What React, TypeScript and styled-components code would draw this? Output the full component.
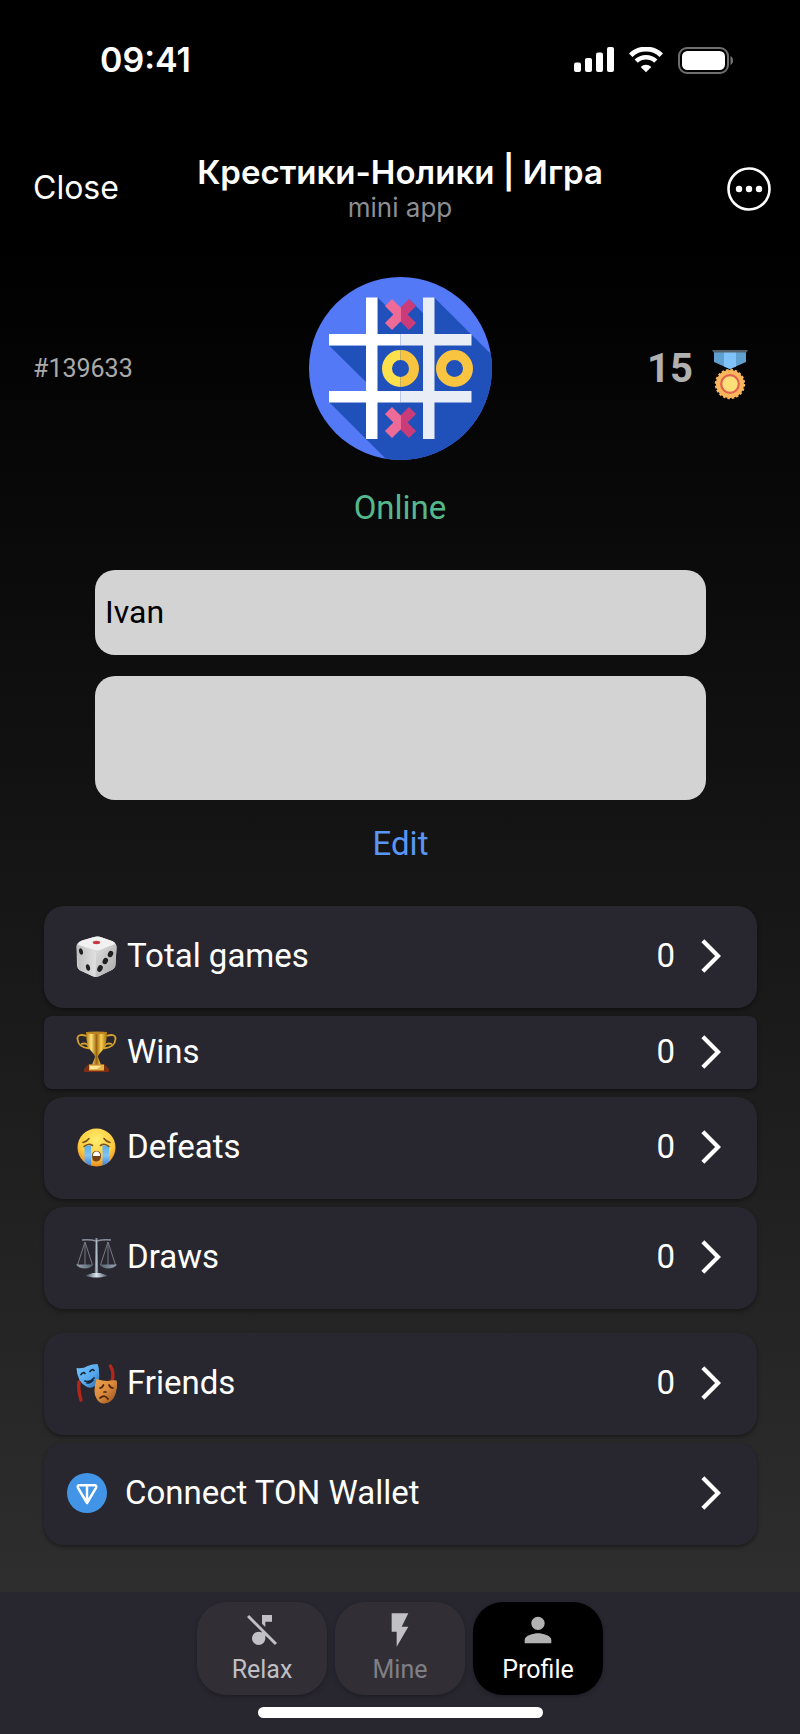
import React from "react";
import styled, { createGlobalStyle } from "styled-components";
import { MdArrowForwardIos, MdFlashOn, MdMusicOff, MdPerson } from "react-icons/md";

const GlobalStyle = createGlobalStyle`
  * { box-sizing: border-box; }
  body { margin: 0; background: #000; }
  button, input, textarea { font: inherit; color: inherit; border: 0; margin: 0; }
  button { background: none; padding: 0; cursor: pointer; }
`;

const Page = styled.div`
  min-height: 100vh;
  display: flex;
  flex-direction: column;
  color: #fff;
  font-family: Roboto, sans-serif;
  font-size: 33px;
  line-height: 40px;
  background: linear-gradient(#000 250px, #2e2e2e calc(100% - 142px));
`;

const StatusBar = styled.div`
  display: flex;
  align-items: center;
  justify-content: space-between;
  padding: 40px 66px 40px 100px;
  font-family: Inter, sans-serif;
  font-weight: 600;
  font-size: 34px;
`;

const StatusIcons = styled.div`
  display: flex;
  align-items: center;
  gap: 15px;
`;

const Header = styled.header`
  display: grid;
  grid-template-columns: 1fr auto 1fr;
  align-items: center;
  padding: 32px 29px;
  font-family: Inter, sans-serif;
`;

const CloseButton = styled.button`
  justify-self: start;
  margin-left: 4px;
  font-size: 32px;
`;

const TitleBlock = styled.div`
  text-align: center;
`;

const Title = styled.h1`
  margin: 0;
  font-size: 33px;
  line-height: 40px;
  font-weight: 600;
`;

const Subtitle = styled.div`
  font-size: 26px;
  line-height: 32px;
  color: #8e8e93;
`;

const MoreButton = styled.button`
  justify-self: end;
  display: flex;
  padding-top: 2px;
`;

const Summary = styled.section`
  display: grid;
  grid-template-columns: 1fr auto 1fr;
  align-items: center;
  padding: 21px 52px 0 33px;
`;

const UserId = styled.span`
  font-size: 25px;
  color: #aaa;
`;

const Score = styled.div`
  justify-self: end;
  display: flex;
  align-items: center;
  gap: 19px;
  font-size: 40px;
  font-weight: 700;
  color: #b0b0b0;

  svg {
    margin-top: 12px;
  }
`;

const Avatar = styled.svg`
  display: block;
  margin-left: 19px;
`;

const Online = styled.p`
  margin: 28px 0 0;
  text-align: center;
  color: #55b88c;
`;

const Form = styled.form`
  display: flex;
  flex-direction: column;
  align-items: stretch;
  gap: 21px;
  padding: 42px 94px 0 95px;
`;

const NameField = styled.input`
  width: 100%;
  height: 85px;
  padding: 0 10px 2px;
  border-radius: 20px;
  background: #d3d3d3;
  color: #000;
  font-size: 32px;
`;

const BioField = styled.textarea`
  display: block;
  width: 100%;
  height: 124px;
  padding: 20px 10px;
  border-radius: 20px;
  background: #d3d3d3;
  color: #000;
  font-size: 32px;
  resize: none;
`;

const EditButton = styled.button`
  align-self: center;
  margin-top: 3px;
  color: #5a96f5;
`;

const List = styled.div`
  display: flex;
  flex-direction: column;
  gap: 8px;
  padding: 42px 43px 0 44px;
`;

const Row = styled.button<{ $compact?: boolean; $section?: boolean; $wallet?: boolean }>`
  display: flex;
  align-items: center;
  gap: ${(p) => (p.$wallet ? 18 : 10)}px;
  min-height: ${(p) => (p.$compact ? 73 : 102)}px;
  margin-top: ${(p) => (p.$section ? 16 : 0)}px;
  padding: 0 26px 2px ${(p) => (p.$wallet ? 23 : 32)}px;
  border-radius: ${(p) => (p.$compact ? 8 : 20)}px;
  background: #28272f;
  box-shadow: 0 2px 4px rgba(0, 0, 0, 0.4);
  text-align: left;

  > svg {
    flex: none;
  }
`;

const RowLabel = styled.span`
  flex: 1;
`;

const RowValue = styled.span`
  margin-right: 6px;
`;

const BottomBar = styled.footer`
  margin-top: auto;
  display: flex;
  flex-direction: column;
  align-items: center;
  gap: 12px;
  padding: 10px 0 16px;
  background: #282730;
`;

const Tabs = styled.nav`
  display: flex;
  gap: 8px;
`;

const Tab = styled.button<{ $tone: "normal" | "dim" | "active" }>`
  width: 130px;
  height: 93px;
  display: flex;
  flex-direction: column;
  align-items: center;
  padding-top: 8px;
  border-radius: 30px;
  font-size: 25px;
  line-height: 40px;
  background: ${(p) => (p.$tone === "active" ? "#000" : "#312f35")};
  color: ${(p) => ({ normal: "#c0bfc4", dim: "#807f85", active: "#fff" })[p.$tone]};
  box-shadow: 0 2px 5px rgba(0, 0, 0, 0.25);

  svg {
    flex: none;
    color: ${(p) => (p.$tone === "active" ? "#b2b2b2" : "#c1c0c4")};
  }
`;

const HomeIndicator = styled.div`
  width: 285px;
  height: 11px;
  border-radius: 6px;
  background: #fff;
`;

const Signal = () => (
  <svg width="40" height="26" viewBox="0 0 40 26" fill="#fff">
    <rect x="0" y="15.5" width="7" height="9.5" rx="2" />
    <rect x="11" y="11" width="7" height="14" rx="2" />
    <rect x="22" y="5.5" width="7" height="19.5" rx="2" />
    <rect x="33" y="0" width="7" height="25" rx="2" />
  </svg>
);

const Wifi = () => (
  <svg width="34" height="26" viewBox="0 0 34 26" fill="none" stroke="#fff">
    <path d="M1.7 8.3a22 22 0 0 1 30.6 0" strokeWidth="5" />
    <path d="M7.2 14.2a14.2 14.2 0 0 1 19.6 0" strokeWidth="4.6" />
    <path d="M17 25.2l-5.3-5.3a7.5 7.5 0 0 1 10.6 0z" fill="#fff" stroke="none" />
  </svg>
);

const Battery = () => (
  <svg width="56" height="27" viewBox="0 0 56 27">
    <rect x="1" y="1" width="49" height="25" rx="8" fill="none" stroke="#6f6f6f" strokeWidth="2" />
    <rect x="4" y="4" width="43" height="19" rx="5.5" fill="#fff" />
    <path d="M52.5 9c3.3 1.3 3.3 7.7 0 9z" fill="#777" />
  </svg>
);

const More = () => (
  <svg width="44" height="44" viewBox="0 0 44 44" fill="#fff">
    <circle cx="22" cy="22" r="20.5" fill="none" stroke="#fff" strokeWidth="2.6" />
    <circle cx="12" cy="22" r="3.2" />
    <circle cx="22" cy="22" r="3.2" />
    <circle cx="32" cy="22" r="3.2" />
  </svg>
);

const Cross = ({ y }: { y: number }) => (
  <g strokeWidth="10" fill="none">
    <path d={`M79.5 ${y - 12}l12 12l-12 12`} stroke="#ee6a97" />
    <path d={`M103.5 ${y - 12}l-12 12l12 12`} stroke="#c93c79" />
    <path d={`M91.5 ${y - 7}v14l-7-7z`} fill="#ee6a97" stroke="none" />
    <path d={`M91.5 ${y - 7}v14h-.5l.5-14z`} fill="#c93c79" stroke="none" />
    <path d={`M92 ${y - 7}v14h-1l-7-7 7-7z`} fill="#ee6a97" stroke="none" />
  </g>
);

const GameLogo = () => (
  <Avatar width="183" height="183" viewBox="0 0 183 183" role="img" aria-label="Avatar">
    <defs>
      <clipPath id="disc"><circle cx="91.5" cy="91.5" r="91.5" /></clipPath>
    </defs>
    <g clipPath="url(#disc)">
      <path fill="#5379f6" d="M0 0h183v183H0z" />
      <path fill="#2051ba" d="M68.5 20.3L91 43 100 22 114 36h11V20.3L183 78v105H78L20 125h37v-20L20 68.5h48.500z" />
      <Cross y={37.5} />
      <Cross y={145.5} />
      <path fill="#fff" d="M57 20.5h11.5V57h23v11.500h-23V114h23v11.500h-23V162H57v-36.500H20V114h37V68.500H20V57h37z" />
      <path fill="#e9edf5" d="M91.5 57H114V20.500h11.500V57h37v11.500h-37V114h37v11.500h-37V162H114v-36.500H91.500V114H114V68.500H91.500z" />
      <g fill="none" strokeWidth="10">
        <path d="M91.5 78a13.5 13.5 0 0 0 0 27" stroke="#fce04c" />
        <path d="M91.5 78a13.5 13.5 0 0 1 0 27" stroke="#f9c440" />
        <circle cx="145.5" cy="91.5" r="13.5" stroke="#f9c440" />
      </g>
    </g>
  </Avatar>
);

const Medal = () => (
  <svg width="36" height="50" viewBox="0 0 36 50">
    <path d="M2 2h32v10L18 19 2 12z" fill="#60a0d0" />
    <path d="M12 2h12v14.5L18 19l-6-2.5z" fill="#80c2fa" />
    <path d="M0 0h36l-1.5 2.5h-33z" fill="#566069" />
    <circle cx="18" cy="34" r="14" fill="#f9b65c" />
    <circle cx="18" cy="34" r="14" fill="none" stroke="#f9b65c" strokeWidth="2.4" strokeDasharray="2.5 1.898" />
    <circle cx="18" cy="34" r="8.8" fill="#fede78" stroke="#df6350" strokeWidth="2.2" />
  </svg>
);

const Dice = () => (
  <svg width="41" height="41" viewBox="0 0 41 41">
    <defs>
      <linearGradient id="dl" x1="0" x2="1"><stop stopColor="#bdbdbd" /><stop offset="1" stopColor="#e2e2e2" /></linearGradient>
      <linearGradient id="dr" x1="0" x2="1" y2="1"><stop stopColor="#dedede" /><stop offset="1" stopColor="#a8a8a8" /></linearGradient>
    </defs>
    <path d="M.5 10Q1 6 6 4.500L18 1q4-1 8 .5L36 5q5 2 4.500 7L39.500 29q0 3-4 5l-12 6q-4 1.500-7 0L5 35q-4-2-4-6z" fill="#d5d5d5" />
    <path d="M1 9q-.5 3 0 5l1 16q0 3 4 5l10 5q2 1 4 1l.5-22q0-4-4-5.500L4 8q-2-1-3 1z" fill="url(#dl)" />
    <path d="M19.500 41q2 0 5-1.500L36 34q3-2 3.300-5l1.200-17q.2-4-3-4L24 12.500q-4 2-4 6z" fill="url(#dr)" />
    <path d="M2 8.500Q2.500 6 6 4.500L18 1q4-1 8 .5L36 5q3 1 3 3L25 13.500q-4 2-8 0L4 9.500q-2-1-2-1z" fill="#f1f1f1" />
    <ellipse cx="20.500" cy="6.500" rx="3.700" ry="1.700" fill="#c53a40" />
    <g fill="#202020">
      <ellipse cx="5" cy="15.500" rx="1.900" ry="3.300" transform="rotate(-14 5 15.500)" />
      <ellipse cx="12" cy="31.500" rx="2" ry="3.400" transform="rotate(-14 12 31.500)" />
      <ellipse cx="34.500" cy="18" rx="2.600" ry="3.300" transform="rotate(25 34.500 18)" />
      <ellipse cx="29.300" cy="25" rx="2.600" ry="3.300" transform="rotate(25 29.300 25)" />
      <ellipse cx="24" cy="32.500" rx="2.600" ry="3.500" transform="rotate(25 24 32.500)" />
    </g>
  </svg>
);

const Trophy = () => (
  <svg width="41" height="41" viewBox="0 0 41 41">
    <defs>
      <linearGradient id="cup" x1="0" x2="1">
        <stop stopColor="#b27a10" /><stop offset=".25" stopColor="#ffe477" /><stop offset=".5" stopColor="#9d6510" />
        <stop offset=".72" stopColor="#f7cf50" /><stop offset="1" stopColor="#a56c0b" />
      </linearGradient>
    </defs>
    <g fill="none" stroke="#d6a12d" strokeWidth="1.8">
      <path d="M11 5Q1 2 1.5 8c.5 6 4.500 9 12 9.500M30 5Q40 2 39.500 8c-.5 6-4.500 9-12 9.500M5 13q7-2 8 4M36 13q-7-2-8 4" />
    </g>
    <path d="M10 1h21q0 15-6 20-3 3-3 5l3 8h-9l3-8q0-2-3-5-6-5-6-20z" fill="url(#cup)" />
    <ellipse cx="20.500" cy="1.800" rx="10.500" ry="1.400" fill="#bd8520" />
    <path d="M8 38l4-4.500h17l4 4.500v3H8z" fill="#7c2e13" />
    <path d="M13 33.500h15v6H13z" fill="#e8b346" />
    <path d="M14 35h11l-4 3h-7z" fill="#ffe69a" />
  </svg>
);

const Crying = () => (
  <svg width="41" height="41" viewBox="0 0 41 41">
    <defs>
      <radialGradient id="face" cx=".5" cy=".3" r=".7"><stop stopColor="#ffed70" /><stop offset=".65" stopColor="#fdcc3d" /><stop offset="1" stopColor="#e98c24" /></radialGradient>
      <linearGradient id="tear" y2="1" x2="0"><stop stopColor="#5aaee9" /><stop offset=".5" stopColor="#82c3f3" /><stop offset="1" stopColor="#3a83db" /></linearGradient>
    </defs>
    <circle cx="20.500" cy="20.500" r="19" fill="url(#face)" />
    <path d="M8.500 18.500h6.500v20q-3.500-1-6.500-4zM26.500 18.500H33v16q-3 3-6.500 4z" fill="url(#tear)" />
    <path d="M7 15.500q4-1 6-4M34 15.500q-4-1-6-4M8 19.500q4.500-4 8.500-1M24.500 18.500q4-3 8.500 1" fill="none" stroke="#7a511d" strokeWidth="1.600" strokeLinecap="round" />
    <path d="M16 29q0-5 4.500-5t4.500 5-4.500 5.500T16 29z" fill="#74431c" />
    <path d="M17 28q.5-3.500 3.500-3.500T24 28v1h-7z" fill="#fff" />
  </svg>
);

const Scales = () => (
  <svg width="41" height="41" viewBox="0 0 41 41">
    <defs>
      <linearGradient id="steel" x1="0" x2="1"><stop stopColor="#3c4b55" /><stop offset=".5" stopColor="#dce6ee" /><stop offset="1" stopColor="#41505b" /></linearGradient>
      <linearGradient id="pan" x1="0" x2="1"><stop stopColor="#9aa6b4" /><stop offset=".5" stopColor="#465260" /><stop offset="1" stopColor="#9aa6b4" /></linearGradient>
    </defs>
    <g fill="none" stroke="#777986" strokeWidth="1">
      <path d="M9 5L1.500 28M9 5l7.500 23M9 5v23M32 5l-7.500 23M32 5l7.500 23M32 5v23" />
      <path d="M6 3q7-1 14.500 1Q28 2 35 3" stroke="#8b909e" strokeWidth="1.500" />
    </g>
    <path d="M0 27.500h17.500q-3 4-8.700 4T0 27.500zM23.500 27.500H41q-3 4-8.700 4t-8.800-4z" fill="url(#pan)" />
    <path d="M19.500 1h2l.7 35h-3.400z" fill="#8290a4" />
    <path d="M20.200 3h.7v33h-.7z" fill="#c4ceda" />
    <path d="M17 36h7l7.500 2.500q-4 2-11 2t-11-2z" fill="url(#steel)" />
  </svg>
);

const Masks = () => (
  <svg width="41" height="41" viewBox="0 0 41 41">
    <defs>
      <linearGradient id="blue" x1="0" x2="1" y2="1"><stop stopColor="#75c6fb" /><stop offset=".6" stopColor="#55a7ec" /><stop offset="1" stopColor="#2a66a3" /></linearGradient>
      <linearGradient id="orange" x1="0" x2="1" y2="1"><stop stopColor="#eba24c" /><stop offset=".5" stopColor="#d9893c" /><stop offset="1" stopColor="#8b4a20" /></linearGradient>
    </defs>
    <path d="M3 19q-1 8 2 18M34.500 3q4 7 1.500 15" fill="none" stroke="#b4261a" strokeWidth="3.400" strokeLinecap="round" />
    <path d="M.5 5q7 1 11-2 5-2 10-2 1.500 3 1.500 8 1.500 9-4 14-4 3-8 1Q1 19 .5 5z" fill="url(#blue)" />
    <path d="M20.500 16q6 2 11 2 5-1 9-.5 1.500 4 0 9-2 13-12 14-5 .5-8-5-4-6 0-19.500z" fill="url(#orange)" />
    <g fill="none" stroke="#17283c" strokeWidth="1.700" strokeLinecap="round">
      <path d="M5 11.500q2-3 4-1M14 8.500q2-3 4-1M9 18q5 2 9-3M11 20q4 0 6-3" />
      <path d="M24 25q2 0 3.500-3M33 22q1.500 3 4 3M24 35q5-4 8 1M28 29h2" stroke="#4e230c" />
    </g>
  </svg>
);

const Ton = () => (
  <svg width="40" height="40" viewBox="0 0 40 40">
    <circle cx="20" cy="20" r="20" fill="#4295e6" />
    <path d="M12.5 12.3h15q2.500 0 1.500 2.500L20 30 11 14.800q-1-2.500 1.500-2.500zM20 12.300V29" fill="none" stroke="#fff" strokeWidth="2.500" strokeLinejoin="round" />
  </svg>
);

const rows = [
  { label: "Total games", icon: <Dice />, value: 0 },
  { label: "Wins", icon: <Trophy />, value: 0, compact: true },
  { label: "Defeats", icon: <Crying />, value: 0 },
  { label: "Draws", icon: <Scales />, value: 0 },
  { label: "Friends", icon: <Masks />, value: 0, section: true },
  { label: "Connect TON Wallet", icon: <Ton />, wallet: true },
];

export default function App() {
  return (
    <Page>
      <GlobalStyle />
      <StatusBar>
        <span>09:41</span>
        <StatusIcons>
          <Signal />
          <Wifi />
          <Battery />
        </StatusIcons>
      </StatusBar>
      <Header>
        <CloseButton type="button">Close</CloseButton>
        <TitleBlock>
          <Title>Крестики-Нолики | Игра</Title>
          <Subtitle>mini app</Subtitle>
        </TitleBlock>
        <MoreButton type="button" aria-label="More">
          <More />
        </MoreButton>
      </Header>
      <main>
        <Summary>
          <UserId>#139633</UserId>
          <GameLogo />
          <Score>
            15
            <Medal />
          </Score>
        </Summary>
        <Online>Online</Online>
        <Form onSubmit={(e) => e.preventDefault()}>
          <NameField aria-label="Name" defaultValue="Ivan" />
          <BioField aria-label="About" />
          <EditButton type="submit">Edit</EditButton>
        </Form>
        <List>
          {rows.map((r) => (
            <Row key={r.label} type="button" $compact={r.compact} $section={r.section} $wallet={r.wallet}>
              {r.icon}
              <RowLabel>{r.label}</RowLabel>
              {r.value !== undefined && <RowValue>{r.value}</RowValue>}
              <MdArrowForwardIos size={40} />
            </Row>
          ))}
        </List>
      </main>
      <BottomBar>
        <Tabs>
          <Tab type="button" $tone="normal"><MdMusicOff size={40} />Relax</Tab>
          <Tab type="button" $tone="dim"><MdFlashOn size={40} />Mine</Tab>
          <Tab type="button" $tone="active" aria-current="page"><MdPerson size={40} />Profile</Tab>
        </Tabs>
        <HomeIndicator />
      </BottomBar>
    </Page>
  );
}
